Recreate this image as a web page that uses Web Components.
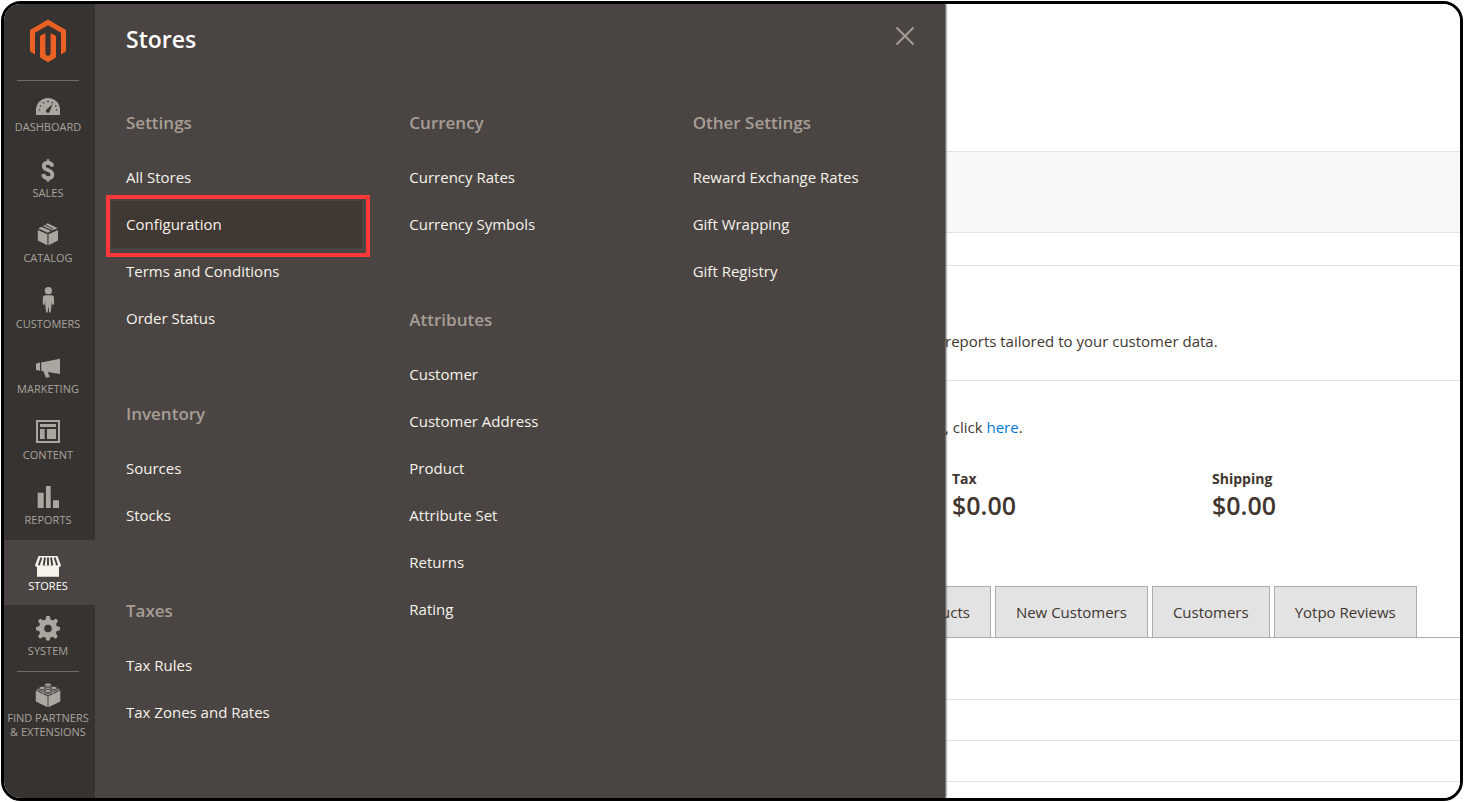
<!DOCTYPE html>
<html lang="en">
<head>
<meta charset="utf-8">
<title>Stores / Magento Admin</title>
<style>
  body {
    margin: 0;
    background: #fff;
    color: #41362f;
    font: 15px/20px "Open Sans", "Noto Sans", sans-serif;
  }
</style>
</head>
<body>
<admin-shell>
  <admin-sidebar slot="sidebar">
    <nav-item icon="dashboard">Dashboard</nav-item>
    <nav-item icon="sales">Sales</nav-item>
    <nav-item icon="catalog">Catalog</nav-item>
    <nav-item icon="customers">Customers</nav-item>
    <nav-item icon="marketing">Marketing</nav-item>
    <nav-item icon="content">Content</nav-item>
    <nav-item icon="reports">Reports</nav-item>
    <nav-item icon="stores" active>Stores</nav-item>
    <nav-item icon="system">System</nav-item>
    <nav-item icon="partners" slot="footer">Find Partners<br>&amp; Extensions</nav-item>
  </admin-sidebar>

  <menu-flyout slot="flyout" heading="Stores">
    <div>
      <menu-group heading="Settings">
        <menu-link>All Stores</menu-link>
        <menu-link current>Configuration</menu-link>
        <menu-link>Terms and Conditions</menu-link>
        <menu-link>Order Status</menu-link>
      </menu-group>
      <menu-group heading="Inventory">
        <menu-link>Sources</menu-link>
        <menu-link>Stocks</menu-link>
      </menu-group>
      <menu-group heading="Taxes">
        <menu-link>Tax Rules</menu-link>
        <menu-link>Tax Zones and Rates</menu-link>
      </menu-group>
    </div>
    <div>
      <menu-group heading="Currency">
        <menu-link>Currency Rates</menu-link>
        <menu-link>Currency Symbols</menu-link>
      </menu-group>
      <menu-group heading="Attributes">
        <menu-link>Customer</menu-link>
        <menu-link>Customer Address</menu-link>
        <menu-link>Product</menu-link>
        <menu-link>Attribute Set</menu-link>
        <menu-link>Returns</menu-link>
        <menu-link>Rating</menu-link>
      </menu-group>
    </div>
    <div>
      <menu-group heading="Other Settings">
        <menu-link>Reward Exchange Rates</menu-link>
        <menu-link>Gift Wrapping</menu-link>
        <menu-link>Gift Registry</menu-link>
      </menu-group>
    </div>
  </menu-flyout>

  <dashboard-page></dashboard-page>
</admin-shell>

<script>
const ICONS = {
  dashboard: `
    <path d="M4 27v-5a12 12 0 0 1 24 0v5z"/>
    <g class="cut">
      <circle cx="7.5" cy="22" r="0.8"/><circle cx="8.5" cy="18" r="0.8"/><circle cx="11.5" cy="14.8" r="0.8"/>
      <circle cx="16" cy="13.4" r="0.8"/><circle cx="20.3" cy="14.6" r="0.8"/><circle cx="23.7" cy="18" r="0.8"/>
      <circle cx="24.6" cy="22" r="0.8"/>
      <path d="M20.6 16l-2.7 7.2a2 2 0 1 1-3.1-2z"/>
    </g>`,
  sales: `
    <path d="M20.3 12.600C20 10 18.400 8.900 15.900 8.900c-2.600 0-4.200 1.200-4.200 3.300 0 2.300 1.900 3 4.200 3.800 2.600.9 4.500 1.800 4.500 4.400 0 2.500-1.900 3.700-4.500 3.700-2.700 0-4.400-1.300-4.700-4.100" class="line" stroke-width="3.700"/>
    <path d="M14.700 5.300h2.600v4h-2.600zM14.700 23.700h2.600v4h-2.600z"/>`,
  catalog: `
    <path d="M5.800 11l9.600 4.300v11L5.800 21.600zM26 11l-9.500 4.300v11l9.500-4.700z"/>
    <path d="M6.300 9.500l3.200-1.800 9.400 4.400-3 1.600zM11 7l4.700-2.800 9.800 5.100-5 2.200z"/>
    <path d="M13 5.600l8.600 4.800" class="cutline" stroke-width="1"/>`,
  customers: `
    <circle cx="16.400" cy="5.700" r="3.600"/>
    <path d="M13.600 10.200h5.600c1.800 0 2.800 1.200 2.800 3v6.100l-1.800.6-.7-4.600v5.300l-.9 6.800h-1.400l-.8-6.500-.8 6.500h-1.400l-.9-6.800v-5.300l-.7 4.600-1.800-.6v-6.100c0-1.800 1-3 2.800-3z"/>`,
  marketing: `
    <path d="M4 13.400l4-.8v8.200l-4-.8zM9.200 12.400L28 8.700v15.200l-12.200-2 2 5-3.800.9-2.600-6.600-2.200-.4z"/>`,
  content: `
    <path fill-rule="evenodd" d="M4 4h24v23H4zM6 6v19h20V6z"/>
    <path d="M8 8h16v3H8zM8 13h4.600v10H8zM15 13h9v10h-9z"/>`,
  reports: `<path d="M5.700 11.700h6V27h-6zM14 5h4.700v22H14zM21 19.300h6V27h-6z"/>`,
  stores: `
    <path d="M5 19h22v10.700H5zM6.500 9h19L29 18.400c-.2 1.500-4 1.800-5 .2-1 1.500-4.500 1.500-5.300 0-.9 1.500-4.500 1.500-5.400 0-.9 1.500-4.500 1.500-5.300 0-1 1.600-4.800 1.300-5-.2z"/>
    <path d="M9.400 10.500l-2.600 7.800M13 10.500l-1.300 8M19 10.500l1.300 8M22.600 10.500l2.600 7.800M16 10.500v8" class="cutline" stroke-width="2"/>`,
  system: `
    <path fill-rule="evenodd" d="M14.300 4h3.400l.9 3.600 2.200.9L24 6.600 26 9l-2 3.100.8 2.100 3.200.8v3.200l-3.200.9-.9 2.200 2 3.100-2.300 2.300-3.200-2-2 .9-.8 3h-3.200l-.9-3-2.200-.9-3.200 2L6 24.400l2-3.100-.9-2.200-3.100-.9V15l3.100-.8.9-2.100L6 9l2.100-2.400 3.200 1.900 2.200-.9zM16 12.700a3.800 3.800 0 1 0 0 7.600 3.800 3.800 0 0 0 0-7.600z"/>`,
  partners: `
    <path d="M3.800 11.600l11.800 5.600V28.200L3.800 22.600zM28.300 11.600l-11.900 5.600V28.200l11.900-5.600z"/>
    <path d="M4.200 10.700L16 5l12 5.700-12 5.700z"/>
    <g class="stud">
      <path d="M12.700 5.600v1.700c0 2 6.600 2 6.600 0V5.600z"/><ellipse cx="16" cy="5.600" rx="3.300" ry="1.600"/>
      <path d="M6.900 9v1.600c0 2 6.400 2 6.400 0V9z"/><ellipse cx="10.100" cy="9" rx="3.200" ry="1.600"/>
      <path d="M18.800 9v1.600c0 2 6.400 2 6.400 0V9z"/><ellipse cx="22" cy="9" rx="3.200" ry="1.600"/>
      <path d="M12.700 12v1.500c0 2 6.600 2 6.600 0V12z"/><ellipse cx="16" cy="12" rx="3.300" ry="1.600"/>
    </g>`,
};

class AdminShell extends HTMLElement {
  constructor() {
    super();
    this.attachShadow({ mode: "open" }).innerHTML = `
      <style>
        :host {
          display: grid;
          grid-template-columns: 91px 850px minmax(0, 1fr);
          box-sizing: border-box;
          min-height: calc(100vh - 2px);
          margin: 1px;
          border: 3px solid #000;
          border-radius: 20px;
          overflow: hidden;
        }
      </style>
      <slot name="sidebar"></slot>
      <slot name="flyout"></slot>
      <slot></slot>
    `;
  }
}

class AdminSidebar extends HTMLElement {
  constructor() {
    super();
    this.attachShadow({ mode: "open" }).innerHTML = `
      <style>
        :host {
          display: block;
          background: #373330;
        }
        .logo {
          display: flex;
          justify-content: center;
          box-sizing: border-box;
          height: 77px;
          margin: 0 16px 0 13px;
          padding-top: 15px;
          border-bottom: 1px solid #736963;
        }
        nav {
          display: grid;
          grid-auto-rows: 1fr;
          height: 590px;
        }
        hr {
          margin: 0 16px 0 13px;
          border: 0;
          border-top: 1px solid #736963;
        }
      </style>
      <a class="logo" href="#" aria-label="Magento Admin Panel">
        <svg width="36" height="44" viewBox="0 0 36 44" fill="#eb6025">
          <path d="M18 0.500l18 10.500V32.500l-5 3V13.700L18 6.300 5 13.700V35.500l-5-3V11z"/>
          <path d="M10 17l5.400-3V35.500l2.600 1.600 2.600-1.600V14l5.400 3V38.500l-8 4.800L10 38.500z"/>
        </svg>
      </a>
      <nav><slot></slot></nav>
      <hr>
      <slot name="footer"></slot>
    `;
  }
}

class NavItem extends HTMLElement {
  constructor() {
    super();
    this.attachShadow({ mode: "open" });
    const icon = this.getAttribute("icon");

    this.shadowRoot.innerHTML = `
      <style>
        :host {
          display: block;
          --bg: #373330;
          --icon: #aaa6a0;
          color: #a8a39d;
        }
        :host([active]) {
          --bg: #4a4542;
          --icon: #f7f3eb;
          background: var(--bg);
          color: #fff;
        }
        a {
          display: flex;
          flex-direction: column;
          align-items: center;
          padding: 7px 3px 0 0;
          color: inherit;
          font-size: 11px;
          line-height: 14px;
          text-align: center;
          text-decoration: none;
          text-transform: uppercase;
          white-space: nowrap;
        }
        svg { fill: var(--icon); }
        .cut { fill: var(--bg); }
        .line { fill: none; stroke: var(--icon); }
        .cutline { fill: none; stroke: var(--bg); }
        .stud { stroke: var(--bg); stroke-width: 0.8; }
      </style>
      <a href="#">
        <svg width="32" height="32" viewBox="0 0 32 32" aria-hidden="true">${ICONS[icon]}</svg>
        <span><slot></slot></span>
      </a>
    `;
  }
}

class MenuFlyout extends HTMLElement {
  constructor() {
    super();
    this.attachShadow({ mode: "open" }).innerHTML = `
      <style>
        :host {
          display: block;
          position: relative;
          z-index: 1;
          background: #4a4542;
          box-shadow: 1px 0 2px rgba(0, 0, 0, 0.8);
          clip-path: inset(0 -6px 0 0);
        }
        header {
          display: flex;
          justify-content: space-between;
          align-items: flex-start;
          padding: 19px 27px 0 31px;
          height: 88px;
        }
        h2 {
          margin: 0;
          color: #fff;
          font-size: 23px;
          line-height: 32px;
          font-weight: 600;
        }
        button {
          display: flex;
          padding: 0;
          border: 0;
          background: none;
        }
        .columns {
          display: grid;
          grid-template-columns: repeat(3, 1fr);
        }
      </style>
      <header>
        <h2>${this.getAttribute("heading")}</h2>
        <button type="button" aria-label="Close">
          <svg width="26" height="26" viewBox="0 0 26 26" fill="none" stroke="#a79d95" stroke-width="2">
            <path d="M4.500 4.500l17 17M21.500 4.500l-17 17"/>
          </svg>
        </button>
      </header>
      <div class="columns"><slot></slot></div>
    `;
  }
}

class MenuGroup extends HTMLElement {
  constructor() {
    super();
    this.attachShadow({ mode: "open" }).innerHTML = `
      <style>
        :host {
          display: block;
          padding: 0 16px;
          margin-bottom: 60px;
        }
        h3 {
          margin: 0 15px 19px;
          color: #a79d95;
          font-size: 17px;
          line-height: 24px;
          font-weight: 600;
        }
      </style>
      <h3>${this.getAttribute("heading")}</h3>
      <slot></slot>
    `;
  }
}

class MenuLink extends HTMLElement {
  constructor() {
    super();
    this.attachShadow({ mode: "open" }).innerHTML = `
      <style>
        :host {
          display: block;
          position: relative;
        }
        a {
          display: block;
          padding: 0 15px;
          color: #f7f3eb;
          font-size: 15px;
          line-height: 47px;
          font-weight: 500;
          text-decoration: none;
        }
        :host([current]) a { background: #403833; }
        /* marker frame drawn over the neighbouring rows */
        :host([current])::after {
          content: "";
          position: absolute;
          inset: -6px -8px -9px -5px;
          border: 4px solid #fd3838;
          pointer-events: none;
        }
      </style>
      <a href="#"><slot></slot></a>
    `;
  }
}

class DashboardPage extends HTMLElement {
  constructor() {
    super();
    this.attachShadow({ mode: "open" }).innerHTML = `
      <style>
        :host {
          display: block;
          min-width: 0;
          background: #fff;
        }
        .header { height: 147px; }
        .actions {
          height: 80px;
          border: solid #e3e3e3;
          border-width: 1px 0;
          background: #f8f8f8;
        }
        .scope { height: 32px; }
        p { margin: 0; white-space: nowrap; }
        .reporting {
          padding: 65px 0 29px;
          border: solid #e3e3e3;
          border-width: 1px 0;
        }
        .notice { padding: 36px 0 32px; }
        a { color: #007bdb; text-decoration: none; }
        dl {
          display: grid;
          grid-template-columns: 260px 1fr;
          margin: 0;
          padding: 0 0 65px 7px;
        }
        dt {
          font-size: 14px;
          line-height: 20px;
          font-weight: 700;
        }
        dd {
          margin: 0;
          font-size: 25px;
          line-height: 32px;
          font-weight: 600;
        }
        /* the first tab runs in under the menu */
        .tabs {
          display: flex;
          gap: 4px;
          margin-left: -4px;
          border-bottom: 1px solid #adadad;
        }
        button {
          padding: 15px 20px;
          border: 1px solid #adadad;
          border-bottom: 0;
          background: #e3e3e3;
          color: inherit;
          font: inherit;
          white-space: nowrap;
        }
        button:first-child { padding-left: 0; border-left: 0; }
        .row {
          height: 40px;
          border-bottom: 1px solid #e3e3e3;
        }
        .row.tall { height: 61px; }
      </style>
      <div class="header"></div>
      <div class="actions"></div>
      <div class="scope"></div>
      <div class="reporting"><p>reports tailored to your customer data.</p></div>
      <p class="notice">, click <a href="#">here</a>.</p>
      <dl>
        <div><dt>Tax</dt><dd>$0.00</dd></div>
        <div><dt>Shipping</dt><dd>$0.00</dd></div>
      </dl>
      <div class="tabs">
        <button type="button">ucts</button>
        <button type="button">New Customers</button>
        <button type="button">Customers</button>
        <button type="button">Yotpo Reviews</button>
      </div>
      <div class="row tall"></div>
      <div class="row"></div>
      <div class="row"></div>
    `;
  }
}

customElements.define("admin-shell", AdminShell);
customElements.define("admin-sidebar", AdminSidebar);
customElements.define("nav-item", NavItem);
customElements.define("menu-flyout", MenuFlyout);
customElements.define("menu-group", MenuGroup);
customElements.define("menu-link", MenuLink);
customElements.define("dashboard-page", DashboardPage);
</script>
</body>
</html>
